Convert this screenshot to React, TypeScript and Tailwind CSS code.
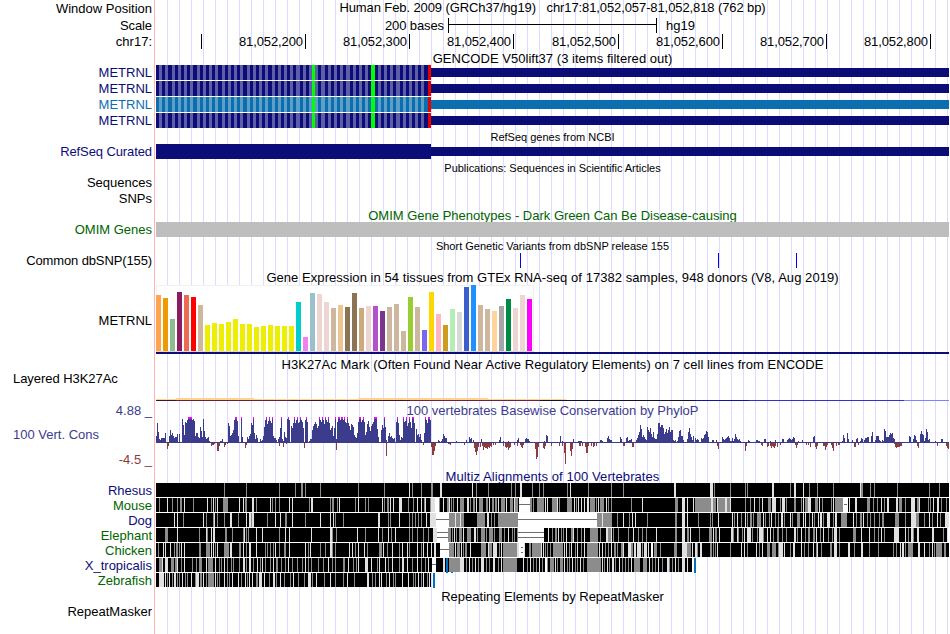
import type { ReactNode } from "react";

// Left edge of the data area; every x below is a page pixel.
const X0 = 156;
const WIDTH = 793;
const PX_PER_BASE = 793 / 762;

const TICKS = [
  { x: 201, label: "" },
  { x: 305, label: "81,052,200" },
  { x: 409, label: "81,052,300" },
  { x: 513, label: "81,052,400" },
  { x: 618, label: "81,052,500" },
  { x: 722, label: "81,052,600" },
  { x: 826, label: "81,052,700" },
  { x: 930, label: "81,052,800" },
];

const GTEX: [number, string][] = [
  [56, "#ffa54f"], [53, "#ee9a00"], [32, "#8fbc8f"], [59, "#8b1c62"], [56, "#ee6a50"], [54, "#ff0000"], [46, "#cdb79e"],
  [26, "#eeee00"], [28, "#eeee00"], [27, "#eeee00"], [29, "#eeee00"], [32, "#eeee00"], [27, "#eeee00"], [27, "#eeee00"],
  [24, "#eeee00"], [25, "#eeee00"], [26, "#eeee00"], [25, "#eeee00"], [25, "#eeee00"], [25, "#eeee00"],
  [49, "#00cdcd"], [14, "#ee82ee"], [58, "#9ac0cd"], [57, "#eed5d2"], [49, "#eed5d2"], [43, "#cdb79e"], [46, "#eec591"],
  [44, "#8b7355"], [58, "#8b7355"], [43, "#cdaa7d"], [45, "#eed5d2"], [45, "#b452cd"], [40, "#7a378b"], [44, "#cdb79e"],
  [47, "#cdb79e"], [20, "#cdb79e"], [54, "#9acd32"], [44, "#cdb79e"], [21, "#7a67ee"], [59, "#ffd700"], [37, "#ffb6c1"],
  [26, "#cd9b1d"], [42, "#b4eeb4"], [39, "#d9d9d9"], [64, "#3a5fcd"], [66, "#1e90ff"], [46, "#cdb79e"], [42, "#cdb79e"],
  [40, "#ffd39b"], [45, "#a6a6a6"], [52, "#008b45"], [43, "#eed5d2"], [56, "#eed5d2"], [52, "#ff00ff"],
];

// Each entry is a start pixel and one base-36 height per column; q (26) is a clipped peak.
const PEAKS: [number, string][] = [
  [156, "7kb435555a1007d8a756690911"],
  [182, "oi8lknqqqqnom7aa65gc6oc64562"],
  [220, "2241"],
  [228, "kh78adnqqm710q610016479kiqa485114237gnqjmqmkq7553146fq42b65oqn"],
  [290, "1hfkqknqklqnlf0nql12449"],
  [312, "dhjljfh"],
  [319, "qnlqnjqnlqkdfh7f"],
  [335, "q4lqqnqqnqlkqkhdjig865a"],
  [358, "lqqlnql8bjmgchjlqqqe610dif"],
  [384, "qg317a675451l"],
  [397, "qk8365qlmqhkqlfqqk0e8969310"],
  [424, "aqnkqqn"],
  [437, "132124975511"],
  [455, "12001"],
  [466, "300645031"],
  [481, "4"],
  [490, "1"],
  [499, "36002"],
  [508, "2"],
  [515, "1035"],
  [525, "454421"],
  [544, "2187"],
  [551, "1"],
  [558, "107020"],
  [573, "4010022221"],
  [600, "3320010574331"],
  [615, "101"],
  [620, "641000562334"],
  [635, "1358bie68643gdbf96b5449kkgiif9beadgbdd323026cd7731004bf96371534301545" + "89cb6110330031"],
  [721, "164345675225249643421"],
  [743, "1"],
  [748, "3201"],
  [755, "1332201"],
  [764, "441001200003"],
  [780, "1044001345434651002"],
  [802, "3"],
  [813, "67"],
  [842, "28501a4001300045102540355661"],
  [871, "7b1037773203"],
  [883, "2ec6668a9a54"],
  [903, "1"],
  [909, "7610487301"],
  [920, "9c9825eb3411"],
  [935, "2000104400101"],
];

// x:length pairs below the axis.
const DIPS =
  "167:6 168:3 211:3 212:2 213:2 214:1 217:8 218:8 219:3 224:4 225:2 227:1 245:5 246:2 279:3 283:4 286:1 304:5 336:7 386:13 " +
  "423:2 431:4 432:12 433:12 434:8 435:3 448:1 449:1 450:2 464:2 474:5 475:9 476:12 477:8 478:4 480:4 482:3 483:7 484:4 485:5 486:5 487:6 488:4 489:5 490:3 491:4 493:2 495:2 " +
  "503:3 505:4 506:5 507:4 508:7 509:5 510:4 514:2 517:3 520:2 521:4 522:5 523:2 535:6 536:16 537:14 538:4 543:5 544:6 545:3 551:3 559:3 562:3 564:10 565:21 570:8 571:13 572:6 579:3 580:3 582:3 585:4 586:10 587:10 588:3 591:3 593:4 594:3 596:3 " +
  "623:3 624:3 632:4 633:4 717:3 718:6 745:8 746:3 761:2 762:3 767:4 768:3 770:3 771:5 772:3 773:4 774:5 775:3 777:4 780:2 795:2 796:5 797:2 806:2 808:2 810:4 815:4 816:6 817:3 823:3 824:3 825:7 826:4 827:2 831:2 832:5 833:8 836:3 838:2 839:2 854:4 855:4 858:2 894:1 895:4 896:5 897:4 898:4 899:4 900:3 901:3 917:3 918:5 937:3 946:3 947:5 948:6";

// Position, tone and optional width of everything that is not solid black.
const ALIGNMENTS = [
  {
    name: "Rhesus", color: "text-[#0c0c78]", end: 949,
    runs: "224g 246g 279g 295g 301g2 305g 320g 358g 384g 409l 412g 421g 431g2 440l2 472l 476g 488g 511g 515g 520l2 532g 539g 543g 567g 570l 588g 611g 623g 674l2 710l3 714g 730g 745g 747g 772l2 790g 794l2 803l 809g 817g 833g 860l 861g2 870g 874g 897g 929g 939g",
  },
  {
    name: "Mouse", color: "text-[#006400]", end: 949,
    runs: "159g 167l 172g 177g 180g2 184l 193g 207l 211g 213l 215g 217l 223g5 239l 243l 245g2 252l2 256g 270l 272g 275g 279g 289l 292l 309g 311l2 330g 332g2 337g 339l 355g 358l 365g 368g 382l 384g 387g2 390l 393l 399l3 408g 413g 417l 421l 424g 425l 430g 431l4 435w4 439g 443l 447g2 449l 451g 453g 457l 460g4 467l2 470g 473g2 476l 479g4 486g2 489l 492g2 495g2 498l 501g4 506l 510g3 514l 515g3 519w11 530g2 533g 537g7 545l 547l 552g5 557l 559g 567g5 574l 576g 578l 581l 584l 587l2 590g5 596g 598l 600g4 606l 608g 611g 631g 642l 675g3 682l3 687l 693l 695g16 711l2 713g3 717l 718g7 725l2 727g3 730l 745g 750g 754l 759g 762l 768g3 772l4 780g 782l3 786g 794g2 801g 803l 805g3 808l3 815g3 819l 822g 831g 833l 835g8 843w5 849l 855l2 867g3 873g 877g 881l 884g 887l2 896l2 899g3 905g 911l4 917g2 919l 928g 930g 933l 937l2 941g 946g",
  },
  {
    name: "Dog", color: "text-[#0c0c78]", end: 949,
    runs: "174l 177l 183g 203l 206g 213g 214l 217g 224g 230l2 238g 246l 249l2 251g 252l2 267g 275l 280l 285g2 292l 305g 320l 330l 333l 335g 343g 378l2 388g 390g 399l 409g 412g 415g 418g 421g 426l 430l6 436w13 449g15 455l 460l 465k 467k2 470k2 473k3 477g8 487l2 491g 494g 498g20 518w79 597g15 602l 617g 623l 629g 632l 635l 647g 675g2 682l3 687l 698g 710g 712g 718l 732l 734g 737l 741g 745l 747g 750g2 753g 757g4 763l 765g 769g 771l 775g 778g 781l2 784g 790l 792g 797g3 803l 805l 809g 812l 814g 818l 820l2 823g 827l3 833g 835l2 841g6 853l 856g 860g2 863l 867g 870g 874g 879g 882g2 895g4 905g 911l5 916g3 924g 929l 932g 937l 940g 945l4",
  },
  {
    name: "Elephant", color: "text-[#006400]", end: 947,
    runs: "165g3 177l 199g 206l 207g 211l 213l2 225g2 232g 243g 244l 246g 248g 256l 262l 279g 285l 289l 311l 330l2 332g 336g 357l 365g 378l 382g 388l 391g 395l 409g 412g 417g 423g 428g 433l4 437w11 448g3 452g 454l 456g 459g3 463l 467g4 474l2 477g 481g4 486g 489g4 494g 499g3 504g 508l 512g 514g 517g 518w26 548l 552g 555g2 558l 561g 563g 566l 571g2 573l 577g 581g 584l 590g8 600g 606l2 608g3 611l 613g 618g 628g 633l 638g 642g 646g 656l 675g2 682l3 687g2 690l 699g 709g3 713l 715g2 719l 731l2 733g 737l 738g 742g 744l 747l4 752g 757g 759l4 763g 767l 770l 773g 777g2 782g 786g 794l2 797g 801l 805g 808g2 813g2 816l 820g 823l 828g 832g 834l3 839g 853g3 861l 869l 874g 878g 881l 884g 894l5 905l 908g 911l2 913g 917l2 932l2 943g",
  },
  {
    name: "Chicken", color: "text-[#006400]", end: 949,
    runs: "158g 163l 165l 170l 174g 176g2 179g 181l 184l 199g2 206g4 211l 213l 215g 217l 224g4 228g 230l2 239g2 243l 246g 249l2 256l 265g 267g 270g 273g 275l 279g 284g2 289l 305l 308g 310l 320g 325g 330l2 332g 335g 349l 352l 355g 358l 364l 367g 379g3 383l 387g 392l 399g 402l 407l 409g 417l 421g 423l 427l 431l 434l2 440w9 449g5 455l 457g3 461l 463g 465g2 470l 481g5 488l 489g3 493l4 499g 501l 503g14 517l2 519w5 524l 529g2 532g9 541l 543l 545g 547g 550g 553g10 564l 566l 569g 571l 575g 577l 581g 584l 587g11 599l 602l 605g 608g 611l 614g2 617g 621g2 623l 628l3 631g2 634l2 637l4 642g 644l3 648l 651w2 654g3 660g 674g3 682l5 687g4 692l 695l2 697g 700l2 710g2 713g 715g 717l 730g 741l 744l 747g 756l 759g 762l 767g3 772g4 778g 779l4 784l 790g 793l2 801l 804g 808g 813l 816g 817l 821g 830g2 834l3 839g 848l2 854g 861l2 869g 878g 893g 896g 900l 902l2 905g 908g5 918l2 924l 929g 932l 934g 936g5 941g 944g2",
  },
  {
    name: "X_tropicalis", color: "text-[#0c0c78]", end: 692,
    runs: "159g3 162l 165l3 171g3 175g2 177l 181g 184l 192g 196g 199g3 206l 208g5 215l 219g 221g 224l 227g 231g 233g 239g 243l2 246g 249l2 253g 257l 260g 262l 265g 270g 273l 276g2 281g 285g 288l 292g 297g 302g 305l 308g 311g 318g 323g 328l 332g 335g 343g2 348l 353g 356g 358l 365l3 371l 377g 379l 385l 388g 392l 399g 402l2 407l 412g 417l 421g 425g 428l 432w4 443l2 449g11 460l4 466g 469l 472g 475l 478g 481l3 486g 489g 493l2 498g 501l 503g14 523l 527g 530l 533g 536g 539l 542g 545w2 547g 550g4 555l 557g 560g3 564l 567g 569g 572l 575g 577g 580l 583g 587g14 602l 604g 607l 609g 612l2 615g 619l 622g 625g 628g 631l 634g6 643g4 649l 652g 655g 658l 662g 667l2 669g 672g 675l 678g 682l3 687l",
  },
  {
    name: "Zebrafish", color: "text-[#006400]", end: 431,
    runs: "159l5 165l 167g 169l 172g 174l2 177g 179g 182l 185g 187g 191l 195g 196l3 200g2 203l 206g 208g6 215l 217g 219g 224l 227g 229g 232l 238l 241g 245l 247g 249l 252l 256g 257g 259l3 264l 269g 273l2 276g 280l 284g 290g 293l 298g 304g 308l3 312g 316l 324g 330l 335g 343g 347l 354g 367l2 372g 375g 379l 381l 386g 389l 393g 395g 402l 408l 413g 415g 418l 421g 423l 427g 429l",
  },
];

const TONES: Record<string, string> = { g: "#8c8c8c", l: "#e1e1e1", w: "#ffffff", k: "#000000" };

function parseRuns(runs: string) {
  return runs.split(" ").map((t) => {
    const m = /^(\d+)([glwk])(\d*)$/.exec(t)!;
    return { x: Number(m[1]), fill: TONES[m[2]], w: Number(m[3] || 1) };
  });
}

function Row({ label, tone = "text-black", className, children }: {
  label?: ReactNode;
  tone?: string;
  className: string;
  children?: ReactNode;
}) {
  return (
    <div className={`flex ${className}`}>
      <div className={`w-[152px] shrink-0 text-right ${tone}`}>{label}</div>
      <div className="ml-1 w-[793px] shrink-0">{children}</div>
    </div>
  );
}

function Title({ className, children }: { className: string; children: ReactNode }) {
  return <div className={`ml-[156px] w-[793px] text-center whitespace-pre ${className}`}>{children}</div>;
}

// Drawing area whose user space starts at the data area's left edge in page pixels.
function Plot({ height, children }: { height: number; children: ReactNode }) {
  return (
    <svg
      width={WIDTH}
      height={height}
      viewBox={`${X0} 0 ${WIDTH} ${height}`}
      shapeRendering="crispEdges"
      className="block"
    >
      {children}
    </svg>
  );
}

function Gene({ dark, light }: { dark: string; light: string }) {
  const codons = Array.from({ length: 88 }, (_, i) => {
    const x = X0 + Math.round(i * 3 * PX_PER_BASE);
    const end = X0 + Math.round((i + 1) * 3 * PX_PER_BASE);
    let fill = i % 2 ? light : dark;
    if (i === 50 || i === 69) fill = "#00ff00";
    if (i === 87) fill = "#e60000";
    return <rect key={i} x={x} y={0} width={end - x} height={15} fill={fill} />;
  });
  return (
    <Plot height={16}>
      {codons}
      <rect x={431} y={3} width={518} height={9} fill={dark} />
    </Plot>
  );
}

function Conservation() {
  return (
    <Plot height={52}>
      <rect x={X0} y={25} width={WIDTH} height={1} fill="#3c3c8c" />
      {PEAKS.map(([start, heights]) => (
        <g key={start}>
          {[...heights].map((c, i) => {
            const h = parseInt(c, 36);
            return <rect key={i} x={start + i} y={26 - h} width={1} height={h} fill="#3c3c8c" />;
          })}
          {[...heights].map((c, i) =>
            c === "q" ? <rect key={i} x={start + i} y={0} width={1} height={2} fill="#ff00ff" /> : null,
          )}
        </g>
      ))}
      {DIPS.split(" ").map((p) => {
        const [x, h] = p.split(":").map(Number);
        return <rect key={x} x={x} y={26} width={1} height={h} fill="#8c3c3c" />;
      })}
    </Plot>
  );
}

function Gap({ x, w, ys }: { x: number; w: number; ys: number[] }) {
  return (
    <>
      {ys.map((y) => (
        <rect key={y} x={x} y={y} width={w} height={1} fill="#6e6e6e" />
      ))}
    </>
  );
}

export default function App() {
  return (
    <main className="h-[634px] w-[950px] overflow-hidden bg-white bg-[image:repeating-linear-gradient(to_right,transparent_0_11px,#dcdcff_11px_12px),linear-gradient(#ffb4b4,#ffb4b4)] bg-[size:793px_100%,1px_100%] bg-[position:156px_0,154px_0] bg-no-repeat font-['Liberation_Sans',Arial,sans-serif] text-[13px] leading-4">
      <Row label="Window Position" className="h-[17px] leading-[17px]">
        <div className="text-center leading-[15px] tracking-[-0.1px] whitespace-pre">
          Human Feb. 2009 (GRCh37/hg19){"   "}chr17:81,052,057-81,052,818 (762 bp)
        </div>
      </Row>
      <Row label={<span className="tracking-[-0.1px]">Scale</span>} className="h-4 leading-[17px]">
        <div className="flex h-4 items-center">
          <span className="w-[288px] text-right tracking-[-0.1px]">200 bases</span>
          <span className="ml-1 flex h-[15px] w-[209px] items-center border-x border-black">
            <span className="mb-px h-px w-full bg-black" />
          </span>
          <span className="ml-[9px]">hg19</span>
        </div>
      </Row>
      <Row label="chr17:" className="h-[17px] leading-[18px]">
        <div className="flex pt-px">
          {TICKS.map((t, i) => (
            <div
              key={t.x}
              className="h-[15px] shrink-0 border-r border-black pr-[2px] text-right leading-4 tracking-[-0.1px]"
              style={{ width: t.x + 1 - (i ? TICKS[i - 1].x + 1 : X0) }}
            >
              {t.label}
            </div>
          ))}
        </div>
      </Row>

      <Title className="h-[15px] leading-[17px] tracking-[0.03px]">GENCODE V50lift37 (3 items filtered out)</Title>
      <Row label="METRNL" tone="text-[#0c0c78]" className="h-4"><Gene dark="#0c0c78" light="#5e5ea6" /></Row>
      <Row label="METRNL" tone="text-[#0c0c78]" className="h-4"><Gene dark="#0c0c78" light="#5e5ea6" /></Row>
      <Row label="METRNL" tone="text-[#0c6eaf]" className="h-4"><Gene dark="#0c6eaf" light="#5e9fc9" /></Row>
      <Row label="METRNL" tone="text-[#0c0c78]" className="h-4"><Gene dark="#0c0c78" light="#5e5ea6" /></Row>

      <Title className="h-[15px] text-[11px] leading-4">RefSeq genes from NCBI</Title>
      <Row label={<span className="tracking-[-0.1px]">RefSeq Curated</span>} tone="text-[#0c0c78]" className="h-4">
        <Plot height={16}>
          <rect x={156} y={0} width={275} height={15} fill="#0c0c78" />
          <rect x={431} y={3} width={518} height={9} fill="#0c0c78" />
        </Plot>
      </Row>

      <Title className="h-[15px] text-[11px] leading-4 tracking-[-0.03px]">
        Publications: Sequences in Scientific Articles
      </Title>
      <Row label="Sequences" className="h-4" />
      <Row label="SNPs" className="h-4" />

      <Title className="h-[15px] leading-[17px] text-[#006400]">
        OMIM Gene Phenotypes - Dark Green Can Be Disease-causing
      </Title>
      <Row label="OMIM Genes" tone="text-[#006400]" className="h-4">
        <div className="h-[15px] bg-[#bebebe]" />
      </Row>

      <Title className="h-[15px] text-[11px] leading-4">Short Genetic Variants from dbSNP release 155</Title>
      <Row label={<span className="tracking-[-0.12px]">Common dbSNP(155)</span>} className="h-4">
        <Plot height={16}>
          {[520, 718, 796].map((x) => (
            <rect key={x} x={x} y={0} width={1} height={15} fill="#0000ff" />
          ))}
        </Plot>
      </Row>

      <Title className="h-4 leading-[17px] tracking-[0.055px]">
        Gene Expression in 54 tissues from GTEx RNA-seq of 17382 samples, 948 donors (V8, Aug 2019)
      </Title>
      <Row label="METRNL" className="h-[71px] leading-[71px]">
        <Plot height={71}>
          <rect x={156} y={0} width={378} height={67} fill="#f0f0f0" />
          <rect x={157} y={1} width={376} height={65} fill="#ffffff" />
          <rect x={156} y={66} width={378} height={1} fill="#d9d9d9" />
          {GTEX.map(([h, fill], i) => (
            <rect key={i} x={X0 + i * 7} y={66 - h} width={5} height={h} fill={fill} />
          ))}
          <rect x={156} y={67} width={793} height={2} fill="#0c0c78" />
        </Plot>
      </Row>

      <Title className="h-[15px] leading-[17px] tracking-[0.05px]">
        H3K27Ac Mark (Often Found Near Active Regulatory Elements) on 7 cell lines from ENCODE
      </Title>
      <Row
        label={<span className="block pl-[13px] text-left tracking-[-0.05px]">Layered H3K27Ac</span>}
        className="h-8"
      >
        <Plot height={32}>
          <rect x={156} y={28} width={410} height={1} fill="#ffd48c" />
          <rect x={176} y={27} width={78} height={1} fill="#ffd48c" />
          <rect x={358} y={27} width={130} height={1} fill="#ffd48c" />
          <rect x={156} y={29} width={254} height={1} fill="#3c1432" />
          <rect x={176} y={29} width={114} height={1} fill="#64233c" />
          <rect x={410} y={29} width={130} height={1} fill="#6e1e50" />
          <rect x={540} y={29} width={156} height={1} fill="#14102d" />
          <rect x={696} y={29} width={53} height={1} fill="#1414aa" />
          <rect x={749} y={29} width={155} height={1} fill="#3232d2" />
          <rect x={904} y={29} width={45} height={1} fill="#8282ff" />
        </Plot>
      </Row>

      <Row label="4.88 _" tone="text-[#3c3c8c]" className="h-[14px] leading-[15px]">
        <div className="text-center text-[#3c3c8c]">100 vertebrates Basewise Conservation by PhyloP</div>
      </Row>
      <Row
        label={
          <span className="flex flex-col">
            <span className="pt-[10px] pl-[13px] text-left text-[#3c3c8c]">100 Vert. Cons</span>
            <span className="pt-[9px] text-[#8c3c3c]">-4.5 _</span>
          </span>
        }
        className="h-[52px]"
      >
        <Conservation />
      </Row>

      <Title className="h-[14px] leading-4 tracking-[0.08px] text-[#0c0c78]">
        Multiz Alignments of 100 Vertebrates
      </Title>
      <div className="flex">
        <div className="w-[152px] shrink-0 text-right leading-[15px]">
          {ALIGNMENTS.map((a) => (
            <div key={a.name} className={`h-[15px] ${a.color}`}>{a.name}</div>
          ))}
        </div>
        <div className="ml-1">
          <Plot height={106}>
            {ALIGNMENTS.map((a, i) => (
              <g key={a.name} transform={`translate(0 ${i * 15})`}>
                <rect x={156} y={-1} width={a.end - 156} height={15} fill="#ffffff" />
                <rect x={156} y={0} width={a.end - 156} height={14} fill="#000000" />
                {parseRuns(a.runs).map((r, j) => (
                  <rect key={j} x={r.x} y={0} width={r.w} height={14} fill={r.fill} />
                ))}
              </g>
            ))}
            <Gap x={519} w={11} ys={[21]} />
            <Gap x={844} w={3} ys={[21]} />
            <Gap x={436} w={13} ys={[36]} />
            <Gap x={518} w={79} ys={[36]} />
            <Gap x={437} w={11} ys={[49, 54]} />
            <Gap x={518} w={26} ys={[49, 54]} />
            <Gap x={440} w={9} ys={[66]} />
            <Gap x={521} w={2} ys={[64, 69]} />
            <Gap x={432} w={4} ys={[81]} />
            <rect x={446} y={75} width={2} height={15} fill="#0072c6" />
            <rect x={451} y={89} width={2} height={1} fill="#0072c6" />
            <rect x={694} y={75} width={2} height={15} fill="#0072c6" />
            <rect x={433} y={90} width={2} height={15} fill="#0072c6" />
          </Plot>
        </div>
      </div>

      <Title className="h-[15px] leading-4">Repeating Elements by RepeatMasker</Title>
      <Row label="RepeatMasker" className="h-[30px]" />
    </main>
  );
}
